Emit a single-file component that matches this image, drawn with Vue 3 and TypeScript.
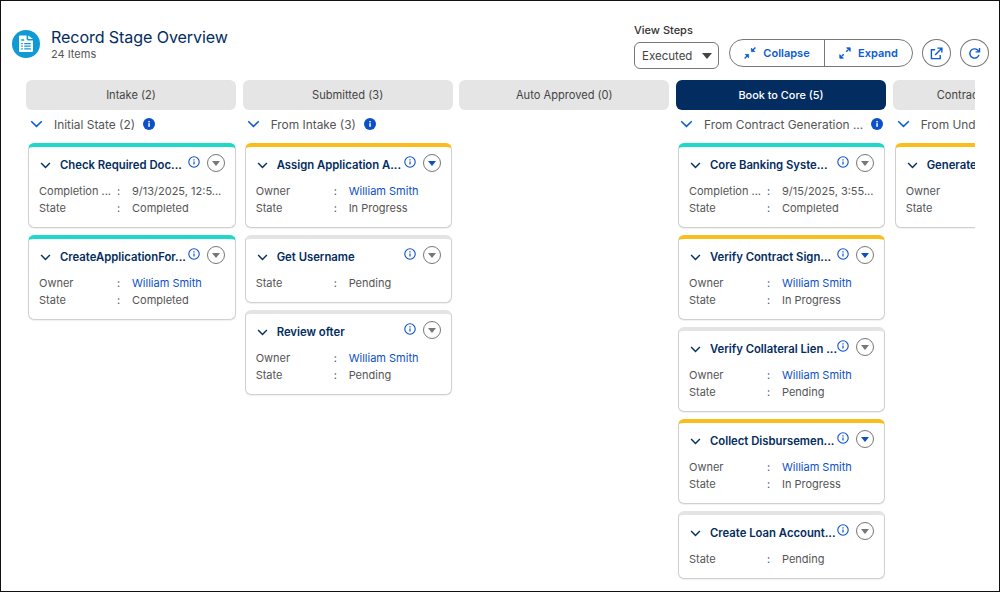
<script setup lang="ts">
interface Row { label: string; value: string; link?: boolean }
interface Card { title: string; tone: 'done' | 'active' | 'idle'; rows: Row[] }
interface Column { stage: string; group?: string; selected?: boolean; cards: Card[] }

const owner = (state: string): Row[] => [
  { label: 'Owner', value: 'William Smith', link: true },
  { label: 'State', value: state },
]
const done = (d: string): Row[] => [
  { label: 'Completion ...', value: d },
  { label: 'State', value: 'Completed' },
]

const columns: Column[] = [
  {
    stage: 'Intake (2)', group: 'Initial State (2)',
    cards: [
      { title: 'Check Required Doc...', tone: 'done', rows: done('9/13/2025, 12:5...') },
      { title: 'CreateApplicationFor...', tone: 'done', rows: owner('Completed') },
    ],
  },
  {
    stage: 'Submitted (3)', group: 'From Intake (3)',
    cards: [
      { title: 'Assign Application A...', tone: 'active', rows: owner('In Progress') },
      { title: 'Get Username', tone: 'idle', rows: [{ label: 'State', value: 'Pending' }] },
      { title: 'Review ofter', tone: 'idle', rows: owner('Pending') },
    ],
  },
  { stage: 'Auto Approved (0)', cards: [] },
  {
    stage: 'Book to Core (5)', group: 'From Contract Generation ...', selected: true,
    cards: [
      { title: 'Core Banking Syste...', tone: 'done', rows: done('9/15/2025, 3:55...') },
      { title: 'Verify Contract Sign...', tone: 'active', rows: owner('In Progress') },
      { title: 'Verify Collateral Lien ...', tone: 'idle', rows: owner('Pending') },
      { title: 'Collect Disbursemen...', tone: 'active', rows: owner('In Progress') },
      { title: 'Create Loan Account...', tone: 'idle', rows: [{ label: 'State', value: 'Pending' }] },
    ],
  },
  {
    stage: 'Contract Generation (1)', group: 'From Underwriting (1)',
    cards: [
      { title: 'Generate Contract', tone: 'active', rows: owner('In Progress') },
    ],
  },
]
</script>

<template>
  <div class="frame">
    <header class="top">
      <div class="identity">
        <span class="logo">
          <svg viewBox="0 0 28 28" width="28" height="28">
            <circle cx="14" cy="14" r="14" fill="#0f9ad6" />
            <path d="M7 6.5a1 1 0 0 1 1-1h6.6v3.6c0 .8.6 1.4 1.4 1.4h5v10.5a1 1 0 0 1-1 1H8a1 1 0 0 1-1-1z" fill="#fff" />
            <path d="M16.2 5.5l4.8 3.6h-4.8z" fill="#fff" />
            <path d="M9.2 10h3M9.2 13.6h1.6M12.2 13.6h6.6M9.2 16.2h1.6M12.2 16.2h6.6M9.2 18.8h1.6M12.2 18.8h6.6" stroke="#0f9ad6" stroke-width="1.3" />
          </svg>
        </span>
        <div class="names">
          <div class="title">Record Stage Overview</div>
          <div class="count">24 Items</div>
        </div>
      </div>
      <div class="tools">
        <div class="steps">
          <div class="steps-label">View Steps</div>
          <div class="select">
            <span>Executed</span>
            <svg viewBox="0 0 10 6" width="10" height="6"><path d="M0 0h10L5 6z" fill="#444" /></svg>
          </div>
        </div>
        <div class="pair">
          <button class="pair-btn">
            <svg viewBox="0 0 12 12" width="12" height="12"><path d="M7.4 1.2v3.4h3.4zM1.2 7.4h3.4v3.4z" fill="#0b5cd5" stroke="#0b5cd5" stroke-width="0.8" /><path d="M9 3l2.4-2.4M3 9L.6 11.4" stroke="#0b5cd5" stroke-width="1.4" /></svg>
            Collapse
          </button>
          <button class="pair-btn">
            <svg viewBox="0 0 12 12" width="12" height="12"><path d="M11.2 .8v3.6L7.6 .8zM.8 11.2V7.6l3.6 3.6z" fill="#0b5cd5" stroke="#0b5cd5" stroke-width="0.8" /><path d="M9 3L7.2 4.8M3 9l1.8-1.8" stroke="#0b5cd5" stroke-width="1.4" /></svg>
            Expand
          </button>
        </div>
        <button class="round">
          <svg viewBox="0 0 14 14" width="13" height="13" fill="none" stroke="#0b5cd5" stroke-width="1.5"><path d="M5.5 3H1.5v9.5h9.5V8.5" /><path d="M5.5 8.5L12.2 1.8M8 1.2h4.8V6" /></svg>
        </button>
        <button class="round">
          <svg viewBox="0 0 14 14" width="13" height="13" fill="none" stroke="#0b5cd5" stroke-width="1.5"><path d="M11.8 8.5A5 5 0 1 1 10.3 3.2L12 4.8" /><path d="M12.4 1v4.2H8.2" /></svg>
        </button>
      </div>
    </header>

    <div class="board">
      <section v-for="col in columns" :key="col.stage" class="column">
        <div class="stage" :class="{ selected: col.selected }">{{ col.stage }}</div>
        <div v-if="col.group" class="group">
          <svg class="group-chev" viewBox="0 0 13 8" width="13" height="8" fill="none" stroke="#0b5cd5" stroke-width="1.5"><path d="M1.2 1.2l5.3 5.2 5.3-5.2" /></svg>
          <span class="group-name">{{ col.group }}</span>
          <svg viewBox="0 0 12 12" width="12" height="12"><circle cx="6" cy="6" r="6" fill="#0b50c8" /><rect x="5.3" y="5.2" width="1.5" height="3.6" fill="#fff" /><rect x="5.3" y="3" width="1.5" height="1.4" fill="#fff" /></svg>
        </div>
        <article v-for="card in col.cards" :key="card.title" class="card" :class="card.tone">
          <div class="card-head">
            <svg class="chev" viewBox="0 0 12 8" width="11" height="7" fill="none" stroke="#032d60" stroke-width="1.6"><path d="M1 1.2l5 5 5-5" /></svg>
            <span class="card-title">{{ card.title }}</span>
            <svg class="info" viewBox="0 0 12 12" width="12" height="12" fill="none"><circle cx="6" cy="6" r="5.2" stroke="#0b50c8" stroke-width="1.1" /><path d="M6 5.4v3" stroke="#0b50c8" stroke-width="1.2" /><path d="M6 3.2v1.2" stroke="#0b50c8" stroke-width="1.2" /></svg>
            <span class="menu" :class="{ on: card.tone === 'active' }">
              <svg viewBox="0 0 8 5" width="8" height="5"><path d="M0 0h8L4 5z" /></svg>
            </span>
          </div>
          <div class="rows">
            <div v-for="row in card.rows" :key="row.label" class="row">
              <span class="label">{{ row.label }}</span>
              <span class="colon">:</span>
              <span class="value" :class="{ link: row.link }">{{ row.value }}</span>
            </div>
          </div>
        </article>
      </section>
    </div>
  </div>
</template>

<style>
html, body { margin: 0; background: #fff; }
</style>

<style scoped>
.frame {
  box-sizing: border-box;
  width: 1000px;
  height: 592px;
  border: 1px solid #111;
  overflow: hidden;
  background: #fff;
  font-family: Inter, "Liberation Sans", sans-serif;
  color: #444;
  padding: 0 10px 0 11px;
}
.top {
  display: flex;
  justify-content: space-between;
  height: 79px;
}
.identity {
  display: flex;
  align-items: flex-start;
  padding-top: 29px;
  gap: 11px;
}
.logo { display: block; height: 28px; }
.names { margin-top: -4px; }
.title {
  font-size: 16.1px;
  line-height: 22px;
  color: #032d60;
  letter-spacing: -0.1px;
}
.count {
  font-size: 11px;
  line-height: 14px;
  margin-top: -1px;
  color: #555;
}
.tools {
  display: flex;
  align-items: flex-start;
  padding-top: 22px;
}
.steps { margin-right: 10px; }
.steps-label {
  font-size: 11px;
  font-weight: 500;
  line-height: 14px;
  color: #333;
  margin-bottom: 5px;
}
.select {
  box-sizing: border-box;
  width: 85px;
  height: 27px;
  border: 1px solid #777;
  border-radius: 6px;
  display: flex;
  align-items: center;
  justify-content: space-between;
  padding: 0 6px 0 7px;
  font-size: 11.5px;
  color: #444;
}
.pair {
  box-sizing: border-box;
  display: flex;
  width: 184px;
  height: 28px;
  margin-top: 16px;
  border: 1px solid #777;
  border-radius: 14px;
  margin-right: 9px;
}
.pair-btn {
  flex: 1 1 auto;
  display: flex;
  align-items: center;
  justify-content: center;
  gap: 7px;
  border: 0;
  background: none;
  padding: 0;
  font: 600 11px Inter, "Liberation Sans", sans-serif;
  color: #0b5cd5;
}
.pair-btn:first-child { flex: 0 0 95px; border-right: 1px solid #777; }
.round {
  box-sizing: border-box;
  width: 29px;
  height: 28px;
  margin-top: 16px;
  margin-left: 9px;
  border: 1px solid #777;
  border-radius: 50%;
  background: none;
  padding: 0;
  display: flex;
  align-items: center;
  justify-content: center;
}
.tools .pair + .round { margin-left: 0; }
.board {
  display: flex;
  gap: 6.67px;
  margin-left: 14px;
  width: 949px;
  overflow: hidden;
}
.column {
  flex: 0 0 210px;
  width: 210px;
}
.stage {
  height: 30px;
  border-radius: 6px;
  background: #e5e5e5;
  display: flex;
  align-items: center;
  justify-content: center;
  font-size: 11.1px;
  color: #444;
  white-space: nowrap;
  overflow: hidden;
}
.stage.selected {
  background: #032d60;
  color: #fff;
  font-size: 10.9px;
  font-weight: 500;
}
.group {
  display: flex;
  align-items: center;
  height: 28px;
  padding-left: 4px;
  margin-bottom: 5px;
  white-space: nowrap;
}
.group-chev { flex: none; margin-right: 11px; }
.group-name {
  font-size: 11.9px;
  color: #555;
  margin-right: 8px;
}
.card {
  box-sizing: border-box;
  width: 207.5px;
  margin: 0 0 7px 2px;
  border: 1px solid #d0d0d0;
  border-radius: 6px;
  padding-bottom: 10.5px;
  background: #fff;
  box-shadow: 0 1px 1px rgba(0, 0, 0, 0.06);
  overflow: hidden;
}
.card.done { border-top: 4px solid #1fd9c8; }
.card.active { border-top: 4px solid #f9be1c; }
.card.idle { border-top: 4px solid #e4e4e4; }
.card-head {
  display: flex;
  align-items: center;
  height: 29px;
  padding: 3.5px 10px 0 11px;
}
.chev { flex: none; margin-right: 9px; }
.card-title {
  flex: 1 1 auto;
  min-width: 0;
  font-size: 11.3px;
  font-weight: 600;
  color: #032d60;
  white-space: nowrap;
}
.info { flex: none; margin: -6px 7px 0 0; }
.menu {
  flex: none;
  box-sizing: border-box;
  width: 18px;
  height: 18px;
  margin-top: -4px;
  border: 1px solid #777;
  border-radius: 50%;
  display: flex;
  align-items: center;
  justify-content: center;
  fill: #777;
}
.menu.on { fill: #0b50c8; }
.rows {
  padding: 3px 10px 0;
}
.row {
  display: flex;
  height: 17px;
  align-items: center;
  font-size: 11px;
  color: #555;
  white-space: nowrap;
}
.label { flex: 0 0 78px; }
.colon { flex: 0 0 15px; }
.value { flex: 1 1 auto; }
.value.link { color: #0b50c8; }
</style>
